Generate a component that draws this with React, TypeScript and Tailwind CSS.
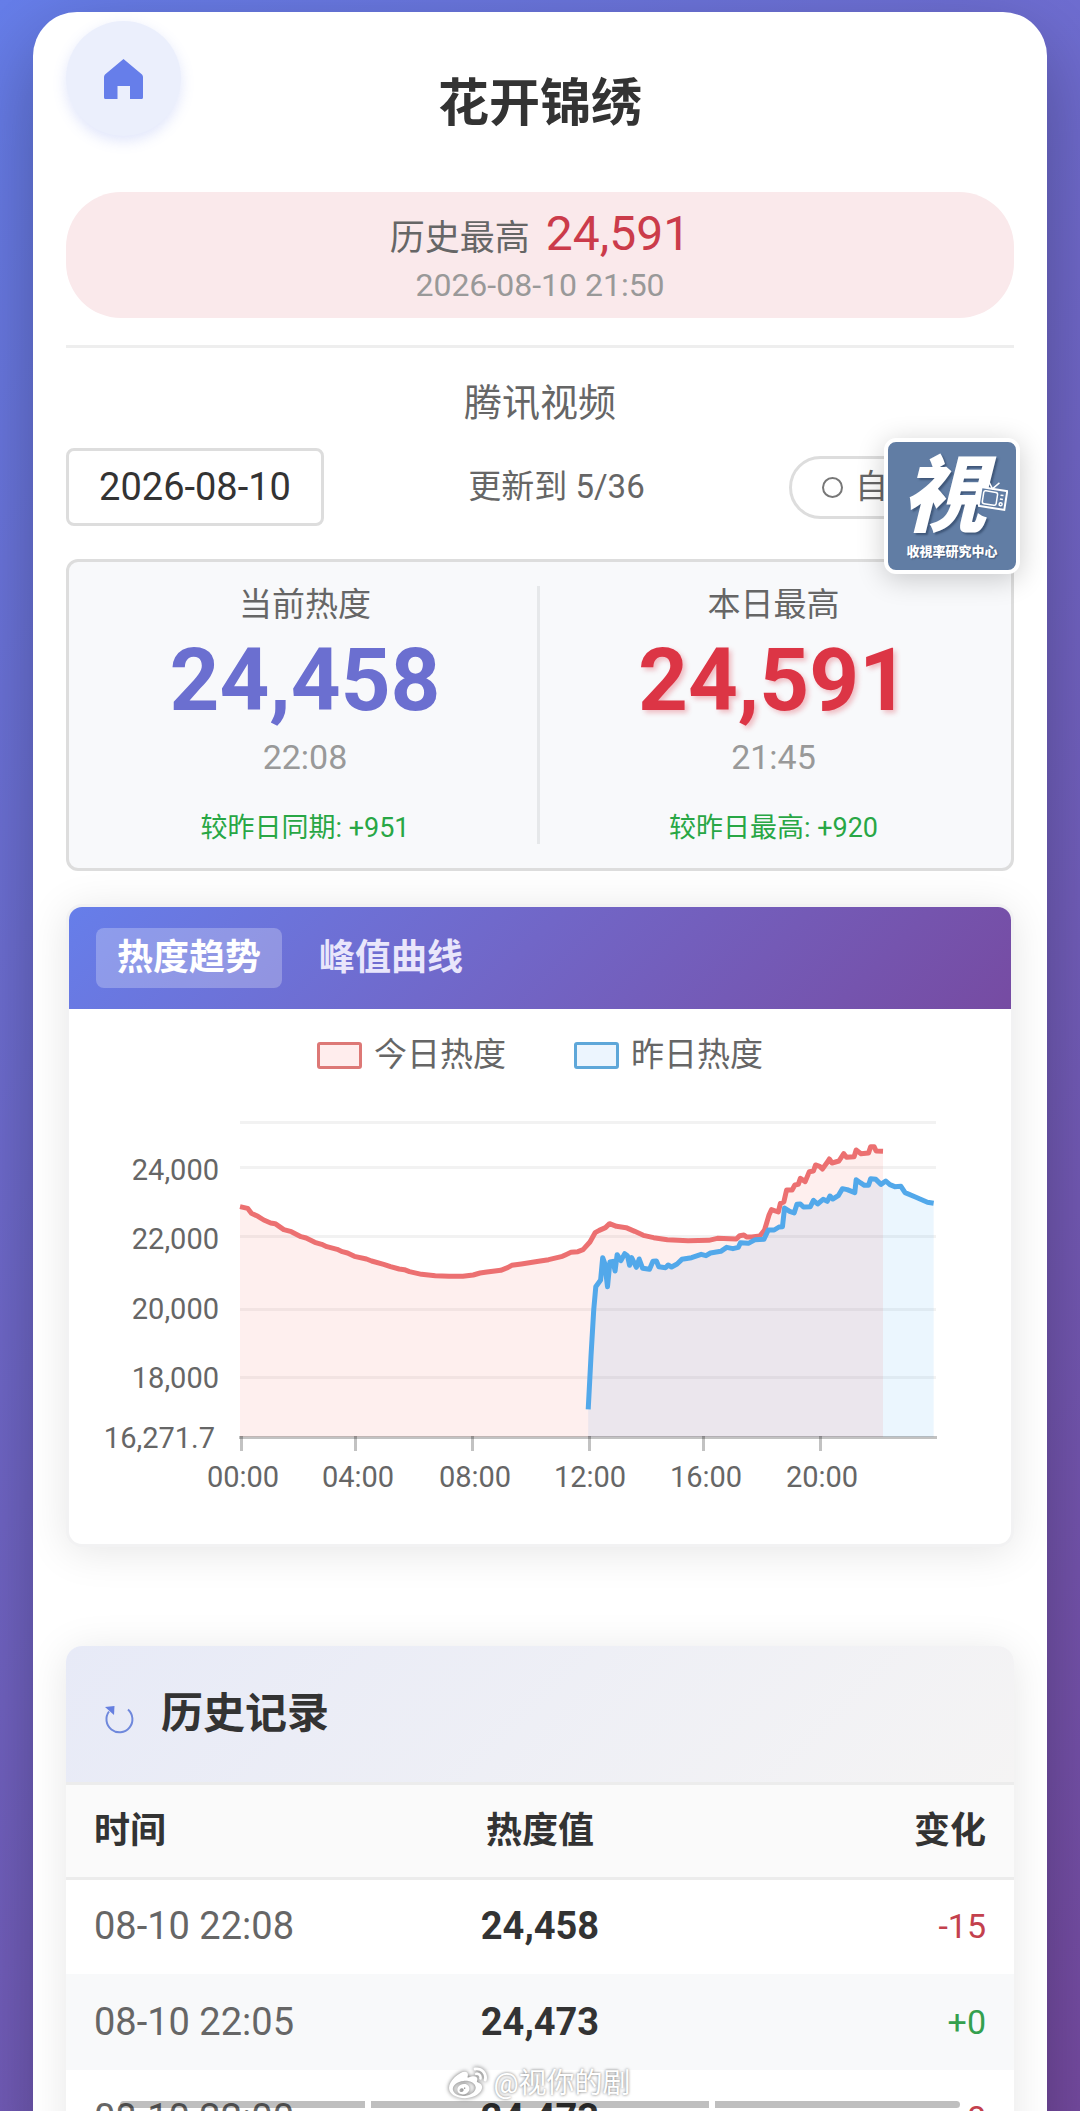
import React from 'react';
import { FaWeibo } from 'react-icons/fa';

type Stat = {
  label: string;
  value: string;
  time: string;
  compare: string;
  valueClass: string;
};

const stats: Stat[] = [
  {
    label: '当前热度',
    value: '24,458',
    time: '22:08',
    compare: '较昨日同期: +951',
    valueClass: 'text-[#6b6fd0]',
  },
  {
    label: '本日最高',
    value: '24,591',
    time: '21:45',
    compare: '较昨日最高: +920',
    valueClass: 'text-[#dc3545] [text-shadow:3px_3px_5px_rgba(220,53,69,0.3)]',
  },
];

const records = [
  { time: '08-10 22:08', value: '24,458', change: '-15' },
  { time: '08-10 22:05', value: '24,473', change: '+0' },
  { time: '08-10 22:00', value: '24,473', change: '-8' },
];

const today =
  '-871,350 -849,355 -838,370 -819,379 -802,390 -782,399 -769,401 -744,419 -722,425 -694,440 -679,444 -654,457 -634,463 -619,470 -589,478 -574,485 -559,489 -539,499 -504,507 -489,513 -454,523 -434,530 -409,537 -394,539 -379,545 -344,553 -304,557 -264,559 -224,559 -194,555 -174,549 -154,546 -114,541 -94,533 -82,526 -54,522 -4,514 25,509 65,499 75,494 90,487 110,485 125,479 145,456 160,428 172,421 190,413 202,401 222,409 250,413 275,424 300,436 330,443 370,449 430,452 490,451 515,445 570,447 580,437 592,435 600,441 615,441 638,438 652,420 665,375 672,359 692,366 698,340 708,336 716,300 732,300 740,285 750,283 756,265 770,275 782,245 794,243 800,225 812,229 820,237 832,220 840,207 848,219 868,213 882,191 890,202 912,200 918,180 932,191 954,189 960,170 970,170 976,183 996,184';

const yesterday =
  '140,958 148,800 156,660 162,590 176,570 182,503 188,520 196,590 203,516 212,514 218,543 224,494 235,512 246,491 254,497 260,526 266,503 280,532 288,507 298,535 318,538 328,514 338,513 345,530 365,533 372,525 382,531 398,522 412,508 440,503 468,493 482,497 495,489 525,484 542,472 560,476 576,472 582,458 605,460 625,449 650,448 663,420 680,420 694,411 704,410 710,354 725,364 738,369 746,343 756,342 765,351 785,350 794,331 806,342 822,328 834,334 842,318 850,327 866,317 878,296 892,299 914,308 918,269 930,278 942,286 954,286 960,266 975,268 990,283 1004,273 1016,284 1030,290 1048,289 1060,308 1090,321 1125,337 1143,340';

const gridRows = [1122, 1167, 1236, 1309, 1377];

const yLabels = [
  { text: '24,000', x: 219, y: 1180 },
  { text: '22,000', x: 219, y: 1249 },
  { text: '20,000', x: 219, y: 1319 },
  { text: '18,000', x: 219, y: 1388 },
  { text: '16,271.7', x: 215, y: 1448 },
];

const xLabels = [
  { text: '00:00', tick: 241, x: 243 },
  { text: '04:00', tick: 355, x: 358 },
  { text: '08:00', tick: 472, x: 475 },
  { text: '12:00', tick: 589, x: 590 },
  { text: '16:00', tick: 703, x: 706 },
  { text: '20:00', tick: 820, x: 822 },
];

function HomeButton() {
  return (
    <a
      href="#home"
      aria-label="首页"
      className="flex size-[115px] items-center justify-center rounded-full bg-[#ebeffc] shadow-[0_5px_14px_rgba(102,126,234,0.2)]"
    >
      <svg viewBox="0 0 39 40" className="w-[39px]" aria-hidden="true">
        <path
          fill="#667eea"
          d="M19.5 0 38 15.5Q39 16.500 39 18V38.500Q39 40 37.500 40H26V27H13.500V40H1.500Q0 40 0 38.500V18Q0 16.500 1 15.500Z"
        />
      </svg>
    </a>
  );
}

function ChannelBadge() {
  return (
    <a
      href="#center"
      className="absolute top-[438px] right-[60px] flex h-[136px] w-[136px] flex-col items-center overflow-hidden rounded-xl border-4 border-white bg-[#617da4] text-white shadow-[0_5px_28px_rgba(0,0,0,0.2)]"
    >
      <span className="mt-2 mr-4 text-[84px] leading-[94px] font-black italic [text-shadow:2px_2px_2px_rgba(30,50,80,0.5)]">
        視
      </span>
      <span className="text-[13px] leading-4 font-black whitespace-nowrap [text-shadow:1px_1px_1px_rgba(30,50,80,0.5)]">
        收視率研究中心
      </span>
      <svg
        viewBox="0 0 30 32"
        className="absolute top-[38px] right-2 w-[30px]"
        fill="none"
        stroke="#fff"
        strokeWidth="2"
        aria-hidden="true"
      >
        <g transform="rotate(9 15 18)">
          <rect x="2" y="9" width="26" height="19" fill="#617da4" />
          <rect x="5" y="12" width="14" height="13" rx="2" strokeWidth="1.500" />
          <path d="M22 14h3M22 18h3" strokeWidth="1.500" />
          <circle cx="23.500" cy="23" r="1.500" strokeWidth="1.500" />
          <path d="M8 2l5 7 6-7" strokeWidth="1.500" />
        </g>
      </svg>
    </a>
  );
}

function TrendChart() {
  return (
    <svg viewBox="69 1090 942 454" className="mt-[15px] block w-full" role="img" aria-label="热度趋势">
      {gridRows.map((y) => (
        <rect key={y} x="240" y={y - 1} width="696" height="3" fill="#f2f2f2" />
      ))}
      <g transform="translate(540 1090) scale(0.34440 0.33333)" strokeLinejoin="round">
        <polygon points={`${yesterday} 1143,1041 140,1041`} fill="rgba(77,171,247,0.11)" />
        <polygon points={`${today} 996,1041 -871,1041`} fill="rgba(248,80,70,0.09)" />
        <polyline
          points={today}
          fill="none"
          stroke="#ec7071"
          strokeWidth="5"
          vectorEffect="non-scaling-stroke"
        />
        <polyline
          points={yesterday}
          fill="none"
          stroke="#52a8ea"
          strokeWidth="5"
          vectorEffect="non-scaling-stroke"
        />
      </g>
      <rect x="239" y="1436" width="698" height="3" fill="rgba(0,0,0,0.24)" />
      {xLabels.map((l) => (
        <g key={l.text}>
          <rect x={l.tick - 1} y="1436" width="3" height="15" fill="rgba(0,0,0,0.24)" />
          <text x={l.x} y="1487" textAnchor="middle" fontSize="29" fill="#666">
            {l.text}
          </text>
        </g>
      ))}
      {yLabels.map((l) => (
        <text key={l.text} x={l.x} y={l.y} textAnchor="end" fontSize="29" fill="#666">
          {l.text}
        </text>
      ))}
    </svg>
  );
}

function HistoryTable() {
  return (
    <section className="mt-[99px] overflow-hidden rounded-t-2xl bg-white shadow-[0_5px_42px_rgba(0,0,0,0.1)]">
      <header className="flex h-[139px] items-center gap-[27px] border-b-[3px] border-[#ececec] bg-linear-135 from-[#e7eaf7] to-[#f5f4f4] px-[38px]">
        <button type="button" aria-label="刷新" className="mt-3 text-[#667eea]">
          <svg viewBox="0 0 30 30" className="w-[30px]" fill="none" aria-hidden="true">
            <path d="M24 4.500A13 13 0 1 1 5 6.500" stroke="#6f88dc" strokeWidth="2" />
            <path d="M1 2 10.500 1 10 10Z" fill="#667fe0" />
          </svg>
        </button>
        <h2 className="text-[42px] leading-[60px] font-bold text-[#333]">历史记录</h2>
      </header>
      <table className="w-full table-fixed border-collapse">
        <thead>
          <tr className="h-[93px] border-b-[3px] border-[#ececec] bg-[#fafafa] text-[36px] text-[#333]">
            <th scope="col" className="px-7 text-left">时间</th>
            <th scope="col" className="text-center">热度值</th>
            <th scope="col" className="px-7 text-right">变化</th>
          </tr>
        </thead>
        <tbody>
          {records.map((r) => (
            <tr key={r.time} className="h-24 even:bg-[#f8f9fa]">
              <td className="px-7 text-[38px] whitespace-nowrap text-[#666]">{r.time}</td>
              <td className="text-center text-[38px] font-bold text-[#333]">{r.value}</td>
              <td
                className={
                  r.change.startsWith('-')
                    ? 'px-7 text-right text-[34px] text-[#c3414d]'
                    : 'px-7 text-right text-[34px] text-[#34a04e]'
                }
              >
                {r.change}
              </td>
            </tr>
          ))}
        </tbody>
      </table>
    </section>
  );
}

export default function App() {
  return (
    <div className="relative h-screen overflow-hidden bg-linear-135 from-[#667eea] to-[#764ba2] px-[33px] pt-3 font-[Roboto,'Noto_Sans_CJK_SC',sans-serif]">
      <main className="min-h-full rounded-t-[44px] bg-white px-[33px] pt-[9px] shadow-[0_28px_82px_rgba(0,0,0,0.3)]">
        <header className="grid grid-cols-[115px_1fr_115px]">
          <HomeButton />
          <h1 className="mt-[53px] text-center text-[51px] leading-[60px] font-bold text-[#333]">花开锦绣</h1>
        </header>

        <section className="mt-14 rounded-[55px] bg-[#fae9eb] pt-[17px] pb-[13px] text-center">
          <p className="flex h-[52px] items-baseline justify-center gap-4 leading-[50px]">
            <span className="text-[35px] text-[#666]">历史最高</span>
            <span className="text-[48px] text-[#cb3b4a]">24,591</span>
          </p>
          <p className="mt-1 text-[32px] leading-10 text-[#999]">2026-08-10 21:50</p>
        </section>

        <div className="mt-[27px] border-t-[3px] border-[#eee]" />

        <p className="mt-[30px] text-center text-[38px] leading-[50px] text-[#666]">腾讯视频</p>
        <div className="mt-5 flex items-center justify-between">
          <input
            type="text"
            aria-label="日期"
            defaultValue="2026-08-10"
            className="h-[78px] w-[258px] rounded-lg border-[3px] border-[#ddd] text-center text-[38px] text-[#333]"
          />
          <span className="text-[33px] text-[#666]">更新到 5/36</span>
          <button
            type="button"
            className="flex h-[63px] w-[225px] items-center gap-3 rounded-full border-[3px] border-[#ddd] pl-[30px] text-[33px] text-[#666]"
          >
            <span className="size-[21px] rounded-full border-2 border-[#777]" />
            <span>自</span>
          </button>
        </div>

        <section className="mt-[33px] grid grid-cols-2 rounded-xl border-[3px] border-[#ddd] bg-[#f8f9fb] px-1 py-6 text-center">
          {stats.map((s) => (
            <div key={s.label} className="border-[#e6e8ea] first:border-r-[3px]">
              <p className="text-[33px] leading-[38px] text-[#666]">{s.label}</p>
              <p className={`mt-1.5 text-[87px] leading-[100px] font-bold ${s.valueClass}`}>{s.value}</p>
              <p className="mt-[7px] text-[34px] leading-10 text-[#999]">{s.time}</p>
              <p className="mt-[35px] text-[27px] leading-8 text-[#28a745]">{s.compare}</p>
            </div>
          ))}
        </section>

        <section className="mt-[33px] overflow-hidden rounded-2xl border-[3px] border-[#f2f2f3] bg-white shadow-[0_5px_42px_rgba(0,0,0,0.1)]">
          <nav className="flex gap-4 bg-linear-135 from-[#667eea] to-[#764ba2] px-[27px] py-[21px] text-[36px] leading-[60px] font-bold">
            <button type="button" className="rounded-lg bg-white/25 px-[21px] text-white">
              热度趋势
            </button>
            <button type="button" className="rounded-lg px-[21px] text-[#e9e6fb]">
              峰值曲线
            </button>
          </nav>
          <ul className="flex justify-center gap-[68px] pt-[26px] text-[33px] leading-10 text-[#666]">
            <li className="flex items-center gap-3">
              <span className="h-[27px] w-[45px] rounded-[3px] border-[3px] border-[#dd7876] bg-[#ffeded]" />
              今日热度
            </li>
            <li className="flex items-center gap-3">
              <span className="h-[27px] w-[45px] rounded-[3px] border-[3px] border-[#5ea7d9] bg-[#ecf5fe]" />
              昨日热度
            </li>
          </ul>
          <TrendChart />
        </section>

        <HistoryTable />
      </main>

      <ChannelBadge />

      <div className="absolute inset-x-[120px] bottom-[3px] grid grid-cols-[245fr_338fr_245fr] gap-1.5">
        <span className="h-[7px] rounded-l bg-black/25" />
        <span className="h-[7px] bg-black/25" />
        <span className="h-[7px] rounded-r bg-black/25" />
      </div>
      <div className="absolute inset-x-0 bottom-2 flex items-center justify-center gap-1.5 text-[28px] leading-9 text-white [text-shadow:0_0_3px_rgba(0,0,0,0.6)]">
        <FaWeibo className="size-[38px] drop-shadow-[0_0_2px_rgba(0,0,0,0.6)]" aria-hidden="true" />
        <span>@视你的剧</span>
      </div>
    </div>
  );
}
